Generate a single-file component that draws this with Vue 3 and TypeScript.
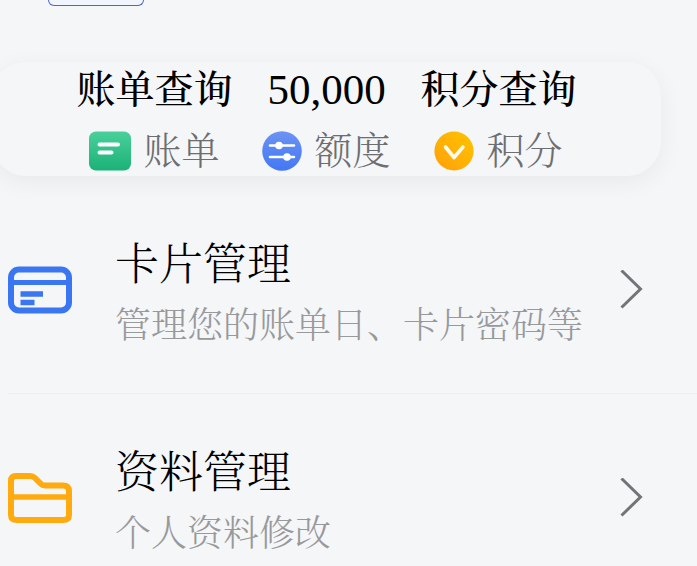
<script setup lang="ts">
interface Stat {
  title: string
  label: string
  icon: 'bill' | 'quota' | 'points'
  numeric?: boolean
}

interface Entry {
  title: string
  note: string
  icon: 'card' | 'folder'
}

const stats: Stat[] = [
  { title: '账单查询', label: '账单', icon: 'bill' },
  { title: '50,000', label: '额度', icon: 'quota', numeric: true },
  { title: '积分查询', label: '积分', icon: 'points' },
]

const entries: Entry[] = [
  { title: '卡片管理', note: '管理您的账单日、卡片密码等', icon: 'card' },
  { title: '资料管理', note: '个人资料修改', icon: 'folder' },
]
</script>

<template>
  <main class="page">
    <div class="tag"></div>

    <section class="summary">
      <div v-for="s in stats" :key="s.label" class="stat">
        <strong class="stat-title" :class="{ numeric: s.numeric }">{{ s.title }}</strong>
        <span class="stat-label">
          <svg v-if="s.icon === 'bill'" width="42" height="40" viewBox="0 0 42 40" aria-hidden="true">
            <defs>
              <linearGradient id="g-bill" x1="0" y1="0" x2="0" y2="1">
                <stop offset="0" stop-color="#4ad09a" />
                <stop offset="1" stop-color="#1bb277" />
              </linearGradient>
            </defs>
            <rect x="0" y="0.5" width="42" height="39" rx="7" fill="url(#g-bill)" />
            <path d="M10.5 13.5H29M10.5 21.5H22.5" stroke="#fff" stroke-width="4" stroke-linecap="round" />
          </svg>
          <svg v-else-if="s.icon === 'quota'" width="40" height="40" viewBox="0 0 40 40" aria-hidden="true">
            <defs>
              <linearGradient id="g-quota" x1="0" y1="0" x2="0" y2="1">
                <stop offset="0" stop-color="#6b93f2" />
                <stop offset="1" stop-color="#4377f4" />
              </linearGradient>
            </defs>
            <circle cx="20" cy="20" r="19.8" fill="url(#g-quota)" />
            <path d="M8 14.5H32M8 26H32" stroke="#fff" stroke-width="2.6" stroke-linecap="round" />
            <circle cx="17" cy="14.5" r="3.8" fill="#fff" />
            <circle cx="25" cy="26" r="3.8" fill="#fff" />
          </svg>
          <svg v-else width="40" height="40" viewBox="0 0 40 40" aria-hidden="true">
            <defs>
              <linearGradient id="g-points" x1="1" y1="0" x2="0" y2="1">
                <stop offset="0" stop-color="#ffc400" />
                <stop offset="1" stop-color="#ff9f0a" />
              </linearGradient>
            </defs>
            <circle cx="20" cy="20" r="19.6" fill="url(#g-points)" />
            <path d="M11.5 16L20 26.500L29 16" fill="none" stroke="#fffbe8" stroke-width="3.6" stroke-linecap="round" stroke-linejoin="round" />
          </svg>
          {{ s.label }}
        </span>
      </div>
    </section>

    <nav class="list">
      <a v-for="e in entries" :key="e.title" class="row" href="#">
        <svg v-if="e.icon === 'card'" class="row-icon" width="64" height="48" viewBox="0 0 64 48" fill="none" stroke="#3a76f2" aria-hidden="true">
          <rect x="3" y="3.5" width="58" height="41" rx="8" stroke-width="6" />
          <path d="M3 16.5H61" stroke-width="5" />
          <path d="M12.5 28H35M12.5 36.5H26.5" stroke-width="5.5" />
        </svg>
        <svg v-else class="row-icon" width="64" height="52" viewBox="0 0 64 52" fill="none" stroke="#ffab0f" stroke-width="6" stroke-linejoin="round" aria-hidden="true">
          <path d="M3 43V9Q3 4 8 4H22Q25 4 27 6L33 12Q34.5 13.5 37 13.5H55Q61 13.5 61 19.5V43Q61 48 55 48H9Q3 48 3 43Z" />
          <path d="M3 25H61" stroke-width="5.5" />
        </svg>
        <span class="row-text">
          <span class="row-title">{{ e.title }}</span>
          <span class="row-note">{{ e.note }}</span>
        </span>
        <svg class="chevron" width="24" height="40" viewBox="0 0 24 40" fill="none" stroke="#737477" stroke-width="3" aria-hidden="true">
          <path d="M1.500 0.500L20.500 19L1.500 37.500" />
        </svg>
      </a>
    </nav>
  </main>
</template>

<style>
html {
  background: #f4f6f8;
}
body {
  overflow: hidden;
}
</style>

<style scoped>
.page {
  font-family: "Liberation Serif", "Noto Serif CJK SC", "Noto Sans CJK SC", serif;
  color: #000;
}
.tag {
  box-sizing: border-box;
  width: 96px;
  height: 6px;
  margin-left: 48px;
  border: 1px solid #5068c4;
  border-top: 0;
  border-radius: 0 0 12px 12px;
  background: #f1f5fe;
}
.summary {
  display: grid;
  grid-template-columns: repeat(3, 172px);
  justify-content: center;
  margin: 56px 36px 0 -8px;
  padding-bottom: 1px;
  border-radius: 34px;
  background: #f4f6f8;
  box-shadow: 0 6px 24px rgba(0, 0, 0, 0.055);
}
.stat {
  display: flex;
  flex-direction: column;
  align-items: center;
}
.stat-title {
  font-size: 39px;
  font-weight: 500;
  line-height: 56px;
  height: 65px;
  white-space: nowrap;
}
.numeric {
  font-size: 43px;
}
.stat-label {
  display: flex;
  align-items: center;
  gap: 12px;
  font-size: 38px;
  font-weight: 300;
  line-height: 48px;
  color: #6d6e70;
  white-space: nowrap;
}
.list {
  margin-top: 10px;
  padding-left: 8px;
}
.row {
  display: flex;
  align-items: center;
  box-sizing: border-box;
  height: 208px;
  padding-right: 53px;
  border-bottom: 1px solid #eceef0;
  color: inherit;
  text-decoration: none;
}
.row-icon {
  flex: none;
}
.row-text {
  display: flex;
  flex: 1;
  flex-direction: column;
  padding-top: 12px;
  padding-left: 43px;
  font-weight: 300;
  white-space: nowrap;
}
.row-title {
  font-size: 44px;
  line-height: 60px;
}
.row-note {
  font-size: 36px;
  line-height: 60px;
  color: #98999b;
}
.chevron {
  flex: none;
}
</style>
